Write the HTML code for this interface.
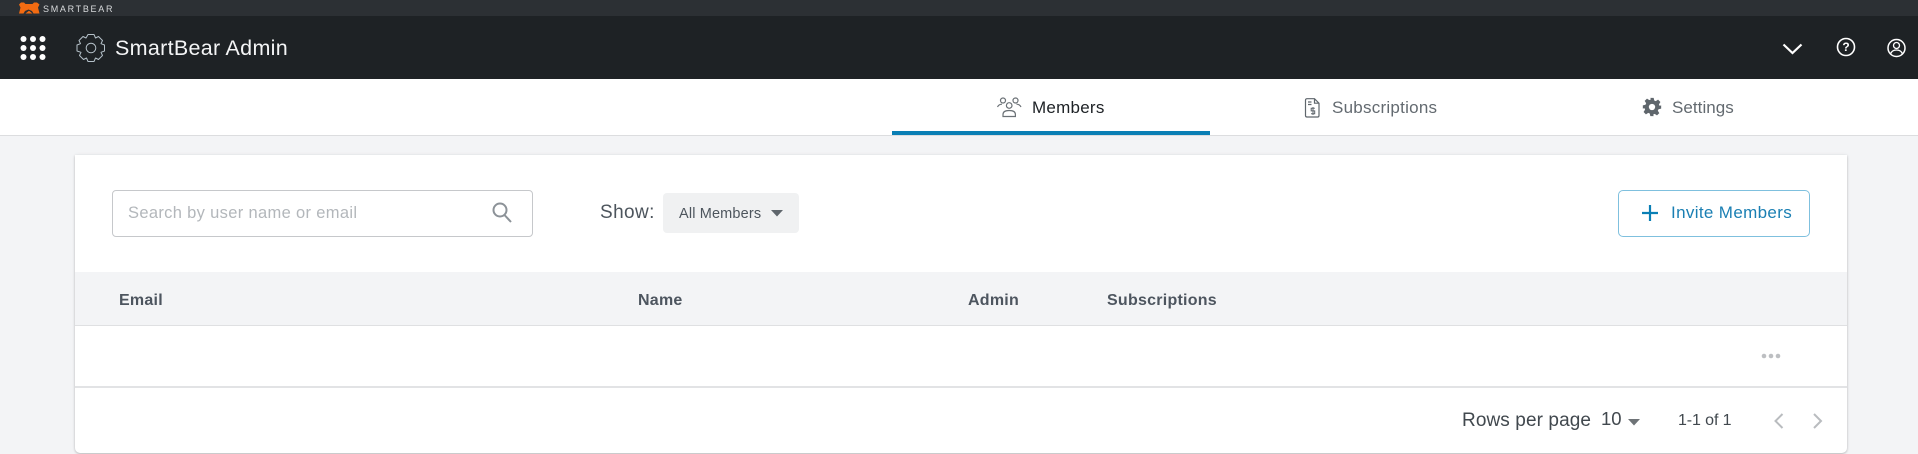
<!DOCTYPE html>
<html><head><meta charset="utf-8"><style>
html,body{margin:0;padding:0;width:1918px;height:454px;overflow:hidden;background:#f3f4f6;font-family:"Liberation Sans",sans-serif}
.a{position:absolute}
.t{position:absolute;white-space:nowrap;line-height:20px;height:20px}
svg{position:absolute;overflow:visible}
</style></head><body>
<div class="a" style="left:0;top:0;width:1918px;height:16px;background:#2c3034"></div>
<div class="a" style="left:0;top:16px;width:1918px;height:63px;background:#1e2225"></div>
<svg style="left:0;top:0" width="120" height="16"><path d="M21 2.500h3l1.500 1.500h7L34 2.500h3l2.500 2-1.500 3 1.500 6h-6l-1.500-2.500-3.500-1.500-3.500 1.500L23.500 13.500H19l1.500-6L19 4.500z" fill="#f26b12"/><path d="M25.500 13.500l3.500-2.800 3.500 2.800z" fill="#f26b12"/></svg>
<div class="t" style="left:43px;top:-1px;font-size:9px;letter-spacing:1.700px;color:#d8dadc">SMARTBEAR</div>
<svg style="left:0;top:16px" width="60" height="63"><g fill="#fff"><circle cx="23.500" cy="23" r="3"/><circle cx="33" cy="23" r="3"/><circle cx="42.500" cy="23" r="3"/><circle cx="23.500" cy="32" r="3"/><circle cx="33" cy="32" r="3"/><circle cx="42.500" cy="32" r="3"/><circle cx="23.500" cy="41" r="3"/><circle cx="33" cy="41" r="3"/><circle cx="42.500" cy="41" r="3"/></g></svg>
<svg style="left:76px;top:33px" width="30" height="30" viewBox="0 0 30 30" fill="none" stroke="#b4c0c8" stroke-width="1"><path d="M12 1.500h6l1.500 3.500 3-1.500 4 4-1.500 3.200 3.500 1.300v6l-3.500 1.300 1.500 3.200-4 4-3-1.500-1.500 3.500h-6l-1.500-3.500-3 1.500-4-4 1.500-3.200L1 18v-6l3.500-1.300L3 7.500l4-4 3 1.500z" stroke-linejoin="round"/><circle cx="15" cy="15" r="4.800"/></svg>
<div class="t" style="left:115px;top:38px;font-size:21.500px;letter-spacing:.3px;color:#f4f5f6">SmartBear Admin</div>
<svg style="left:1780px;top:40px" width="130" height="20" fill="none" stroke="#fff"><path d="M3.500 4.500l9 8.500 9-8.500" stroke-width="2.200"/><circle cx="66" cy="7" r="8.500" stroke-width="1.600"/><circle cx="116.500" cy="8" r="8.500" stroke-width="1.500"/><circle cx="116.500" cy="5.500" r="3" stroke-width="1.300"/><path d="M110.500 14c1-3 3-4 6-4s5 1 6 4" stroke-width="1.300"/></svg>
<div class="t" style="left:1841px;top:37px;width:10px;text-align:center;font-size:12px;font-weight:bold;color:#fff">?</div>

<div class="a" style="left:0;top:79px;width:1918px;height:56px;background:#fff;border-bottom:1.500px solid #dcdddf"></div>
<div class="a" style="left:892px;top:131px;width:318px;height:4px;background:#0a7fb5"></div>
<svg style="left:997px;top:97px" width="24" height="21" fill="none" stroke="#6b7176" stroke-width="1.200"><circle cx="6" cy="3.500" r="2.500"/><circle cx="18.500" cy="3.500" r="2.500"/><circle cx="12.200" cy="8.500" r="2.800"/><path d="M.5 10c1-2 2.500-2.800 4.500-2.800M24 10c-1-2-2.500-2.800-4.500-2.800M6 19.500v-2c0-2.800 2.500-4 6.200-4s6.200 1.200 6.200 4v2z"/></svg>
<div class="t" style="left:1032px;top:98px;font-size:17px;letter-spacing:.25px;color:#1d2125">Members</div>
<svg style="left:1305px;top:98px" width="15" height="20" fill="none" stroke="#5f666c" stroke-width="1.200"><path d="M2 .7h7.500L14 5.200v12.300c0 .9-.6 1.500-1.400 1.500H2c-.8 0-1.500-.6-1.500-1.500V2.200C.5 1.300 1.200.7 2 .7zM9.500 .7v4.500H14M3 4h3.500M3 6.500h3.500"/><path d="M9.800 10.300H6.200v2.600h3.500v2.800H6M8 9v8" stroke-width="1"/></svg>
<div class="t" style="left:1332px;top:98px;font-size:17px;letter-spacing:.25px;color:#636a70">Subscriptions</div>
<svg style="left:1642px;top:97px" width="20" height="20" viewBox="0 0 24 24"><path fill="#5f666c" fill-rule="evenodd" d="M10 1h4l.7 3.200 1.800.8 2.800-1.800 2.800 2.800-1.800 2.800.8 1.800L23 10v4l-3.200.7-.8 1.800 1.800 2.800-2.800 2.800-2.800-1.800-1.800.8L14 23h-4l-.7-3.200-1.800-.8-2.800 1.800-2.800-2.800 1.800-2.800-.8-1.800L1 14v-4l3.200-.7.8-1.800L3.200 4.700 6 1.900l2.800 1.800 1.800-.8z"/><circle cx="12" cy="12" r="3.800" fill="#fff"/></svg>
<div class="t" style="left:1672px;top:98px;font-size:17px;letter-spacing:.05px;color:#636a70">Settings</div>

<div class="a" style="left:75px;top:155px;width:1772px;height:298px;background:#fff;border-radius:0 0 5px 5px;box-shadow:0 1px 2px rgba(0,0,0,.22),0 0 4px rgba(0,0,0,.06)"></div>
<div class="a" style="left:112px;top:190px;width:419px;height:45px;border:1px solid #c6c8cb;border-radius:4px;background:#fff"></div>
<div class="t" style="left:128px;top:203px;font-size:16.500px;letter-spacing:.33px;color:#b3b7bb">Search by user name or email</div>
<svg style="left:491px;top:201px" width="22" height="24" fill="none" stroke="#8c9298" stroke-width="2"><circle cx="9" cy="9" r="6.500"/><path d="M13.500 14l6.500 7"/></svg>
<div class="t" style="left:600px;top:203px;font-size:19px;letter-spacing:.4px;color:#4d555d">Show:</div>
<div class="a" style="left:663px;top:193px;width:136px;height:40px;background:#f0f1f2;border-radius:4px"></div>
<div class="t" style="left:679px;top:204px;font-size:14.500px;letter-spacing:.15px;color:#4d555d">All Members</div>
<svg style="left:771px;top:210px" width="12" height="7"><path d="M0 0h12L6 6.500z" fill="#5f666c"/></svg>
<div class="a" style="left:1618px;top:190px;width:190px;height:45px;border:1px solid #7fc0de;border-radius:5px"></div>
<svg style="left:1641px;top:204px" width="18" height="18"><path d="M9 1v16M1 9h16" stroke="#0a7fb5" stroke-width="2.200"/></svg>
<div class="t" style="left:1671px;top:203px;font-size:17px;letter-spacing:.35px;color:#1a7fb3">Invite Members</div>

<div class="a" style="left:75px;top:272px;width:1772px;height:53px;background:#f3f4f6;border-bottom:1.500px solid #dfe0e2"></div>
<div class="t" style="left:119px;top:291px;font-size:16px;font-weight:bold;letter-spacing:.25px;color:#4d555f">Email</div>
<div class="t" style="left:638px;top:291px;font-size:16px;font-weight:bold;letter-spacing:.25px;color:#4d555f">Name</div>
<div class="t" style="left:968px;top:291px;font-size:16px;font-weight:bold;letter-spacing:.25px;color:#4d555f">Admin</div>
<div class="t" style="left:1107px;top:291px;font-size:16px;font-weight:bold;letter-spacing:.25px;color:#4d555f">Subscriptions</div>
<svg style="left:1761px;top:352px" width="20" height="8" fill="#bdbfc2"><circle cx="3" cy="4" r="2.300"/><circle cx="10" cy="4" r="2.300"/><circle cx="17" cy="4" r="2.300"/></svg>
<div class="a" style="left:75px;top:386px;width:1772px;height:2px;background:#e2e3e5"></div>
<div class="t" style="left:1462px;top:411px;font-size:19px;letter-spacing:.1px;color:#41484e">Rows per page</div>
<div class="t" style="left:1601px;top:409px;font-size:18.500px;color:#41484e">10</div>
<svg style="left:1628px;top:419px" width="12" height="7"><path d="M0 0h12L6 6.500z" fill="#6e7377"/></svg>
<div class="t" style="left:1678px;top:411px;font-size:16px;letter-spacing:-.1px;color:#41484e">1-1 of 1</div>
<svg style="left:1773px;top:412px" width="52" height="20" fill="none" stroke="#b9bcbf" stroke-width="2"><path d="M9.500 2L2.500 9l7 7M41 2l7 7-7 7"/></svg>
</body></html>
